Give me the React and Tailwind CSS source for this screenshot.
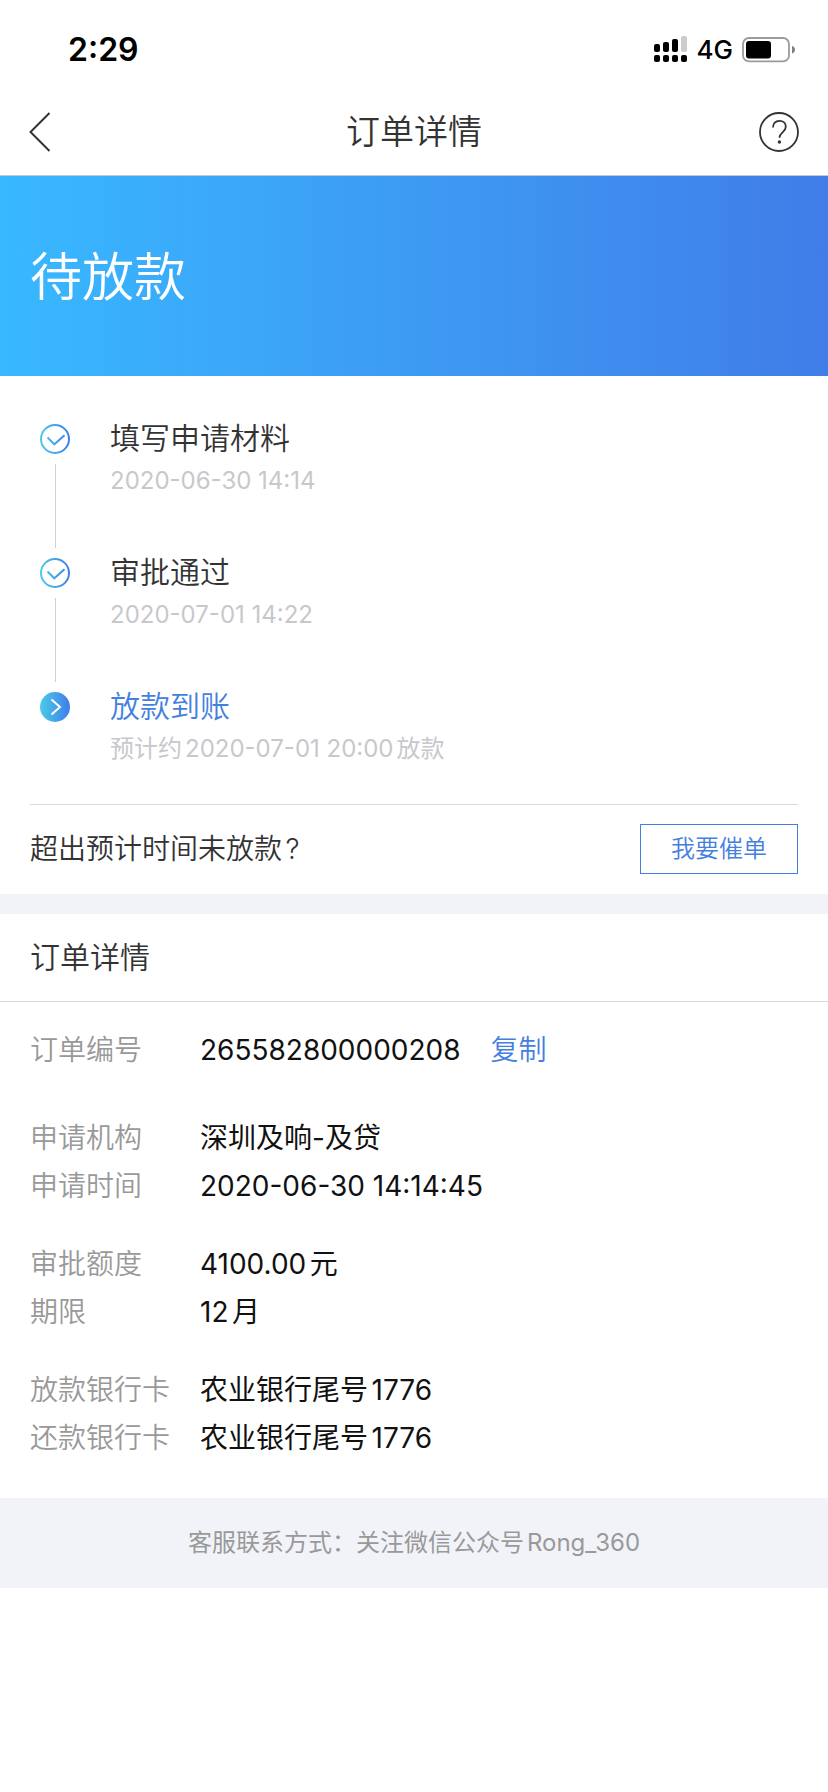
const steps = [
  { title: "填写申请材料", time: "2020-06-30 14:14", done: true },
  { title: "审批通过", time: "2020-07-01 14:22", done: true },
  { title: "放款到账", time: "预计约2020-07-01 20:00放款", done: false },
];

const detailGroups = [
  [
    { label: "申请机构", value: "深圳及响-及贷" },
    { label: "申请时间", value: "2020-06-30 14:14:45" },
  ],
  [
    { label: "审批额度", value: "4100.00元" },
    { label: "期限", value: "12月" },
  ],
  [
    { label: "放款银行卡", value: "农业银行尾号1776" },
    { label: "还款银行卡", value: "农业银行尾号1776" },
  ],
];

const ORDER_NO = "265582800000208";

function SignalIcon() {
  return (
    <svg width="34" height="28" viewBox="0 0 34 28" aria-hidden="true">
      <rect x="0" y="8" width="6" height="8" rx="2" />
      <rect x="9" y="6" width="6" height="10" rx="2" />
      <rect x="18" y="3" width="6" height="13" rx="2" />
      <rect x="27" y="0" width="6" height="16" rx="2" fill="#cccccc" />
      <rect x="0" y="19" width="6" height="7" rx="2" />
      <rect x="9" y="19" width="6" height="7" rx="2" />
      <rect x="18" y="19" width="6" height="7" rx="2" />
      <rect x="27" y="19" width="6" height="7" rx="2" />
    </svg>
  );
}

function BatteryIcon() {
  return (
    <svg width="54" height="26" viewBox="0 0 54 26" aria-hidden="true">
      <rect x="1" y="1" width="46" height="23.4" rx="6" fill="none" stroke="#9b9b9b" strokeWidth="1.8" />
      <rect x="4" y="4" width="25" height="17.4" rx="3" />
      <path d="M50 9c4 1.2 4 6.3 0 7.5z" fill="#808080" />
    </svg>
  );
}

function StatusBar() {
  return (
    <div className="flex h-[88px] items-center justify-between pt-3 pr-8 pl-[68px] text-black">
      <span className="text-[32px] font-semibold">2:29</span>
      <div className="flex items-center">
        <SignalIcon />
        <span className="mx-[9px] text-[26px] leading-none font-medium">4G</span>
        <BatteryIcon />
      </div>
    </div>
  );
}

function NavBar() {
  return (
    <header className="flex h-[88px] items-center justify-between border-b border-[#c8c8c8] px-[29px]">
      <button type="button" aria-label="返回" className="w-10">
        <svg width="22" height="40" viewBox="0 0 22 40" fill="none" stroke="#333333" strokeWidth="2">
          <path d="M20.5 1 1.5 20l19 19" />
        </svg>
      </button>
      <h1 className="text-[34px] font-[350]">订单详情</h1>
      <button type="button" aria-label="帮助">
        <svg width="40" height="40" viewBox="0 0 40 40" fill="none" stroke="#333333" strokeWidth="1.8">
          <circle cx="20" cy="20" r="19" />
          <path d="M14 15.5c0-4 2.6-6.7 6.4-6.7s6.4 2.5 6.4 6c0 5.4-6.4 5.8-6.4 11" />
          <circle cx="20.4" cy="30" r="1.7" fill="#333333" stroke="none" />
        </svg>
      </button>
    </header>
  );
}

function StepIcon({ id, done }) {
  const paint = `url(#${id})`;
  return (
    <svg width="30" height="30" viewBox="0 0 30 30" fill="none" aria-hidden="true">
      <defs>
        <linearGradient id={id} gradientUnits="userSpaceOnUse" x1="0" y1="15" x2="30" y2="15">
          <stop offset="0" stopColor="#4bcbe8" />
          <stop offset="1" stopColor="#3f7de8" />
        </linearGradient>
      </defs>
      {done ? (
        <g stroke={paint} strokeWidth="2">
          <circle cx="15" cy="15" r="14" />
          <path d="M7.5 13.5 14.3 20.3 24.5 11.2" />
        </g>
      ) : (
        <>
          <circle cx="15" cy="15" r="15" fill={paint} />
          <path d="M11.5 7.5 20 15l-8.5 7.5" stroke="#ffffff" strokeWidth="2" />
        </>
      )}
    </svg>
  );
}

function Timeline() {
  return (
    <ol className="px-10 pt-12 pb-[38px]">
      {steps.map((step, index) => (
        <li key={step.title} className="flex gap-10">
          <div className="flex flex-col items-center">
            <StepIcon id={`step-${index}`} done={step.done} />
            {index < steps.length - 1 && <div className="my-[10px] h-[84px] w-px bg-[#cfcfcf]" />}
          </div>
          <div>
            <h3
              className={`text-[30px] leading-[28px] font-[350] ${step.done ? "text-[#333333]" : "text-[#447fdf]"}`}
            >
              {step.title}
            </h3>
            <p className="mt-3 text-2xl leading-[34px] text-[#c8c8cc]">{step.time}</p>
          </div>
        </li>
      ))}
    </ol>
  );
}

function DetailRow({ label, children }) {
  return (
    <div className="flex">
      <dt className="w-[170px] font-[350] text-[#999999]">{label}</dt>
      <dd className="flex gap-[30px] text-[#111111]">{children}</dd>
    </div>
  );
}

export default function App() {
  return (
    <div
      lang="zh-CN"
      className="min-h-screen bg-white font-['Inter','Noto_Sans_CJK_SC',sans-serif] text-[#333333] [text-autospace:normal]"
    >
      <StatusBar />
      <NavBar />

      <main>
        <section className="flex h-[200px] items-center bg-linear-to-r from-[#38b8ff] to-[#407de8] px-[30px] pt-1">
          <h2 className="text-[52px] font-[350] text-white">待放款</h2>
        </section>

        <section>
          <Timeline />
          <div className="mx-[30px] flex items-center justify-between border-t border-[#d9d9d9] pt-[19px] pb-5">
            <p className="text-[28px] font-[350]">超出预计时间未放款?</p>
            <button
              type="button"
              className="h-[50px] w-[158px] border border-[#447fdf] text-2xl font-[350] text-[#447fdf]"
            >
              我要催单
            </button>
          </div>
        </section>

        <section className="border-t-20 border-[#f2f3f8]">
          <h2 className="border-b border-[#d9d9d9] px-[30px] text-[30px] leading-[87px] font-[350]">订单详情</h2>
          <dl className="px-[30px] pt-6 pb-9 text-[28px] leading-[48px]">
            <DetailRow label="订单编号">
              {ORDER_NO}
              <button
                type="button"
                className="font-[350] text-[#447fdf]"
                onClick={() => navigator.clipboard?.writeText(ORDER_NO)}
              >
                复制
              </button>
            </DetailRow>
            <div className="mt-10 flex flex-col gap-[30px]">
              {detailGroups.map((rows) => (
                <div key={rows[0].label}>
                  {rows.map((row) => (
                    <DetailRow key={row.label} label={row.label}>
                      {row.value}
                    </DetailRow>
                  ))}
                </div>
              ))}
            </div>
          </dl>
        </section>
      </main>

      <footer className="bg-[#f2f3f8] text-center text-2xl leading-[90px] text-[#999999]">
        客服联系方式：关注微信公众号Rong_360
      </footer>
    </div>
  );
}
